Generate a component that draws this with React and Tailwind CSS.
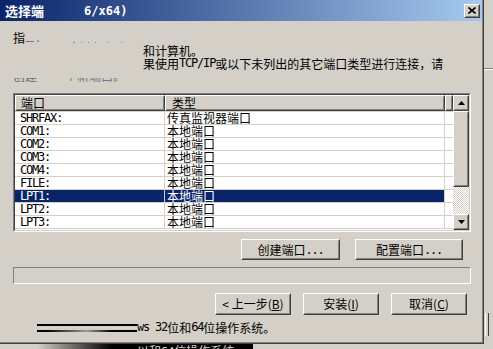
import React from 'react';

const cjk = "font-['Noto_Sans_CJK_SC',sans-serif]";
const mono = "font-['DejaVu_Sans_Mono',monospace] text-[12px] tracking-[-1.2px]";

const ports = [
  ['SHRFAX:', '传真监视器端口'],
  ['COM1:', '本地端口'],
  ['COM2:', '本地端口'],
  ['COM3:', '本地端口'],
  ['COM4:', '本地端口'],
  ['FILE:', '本地端口'],
  ['LPT1:', '本地端口'],
  ['LPT2:', '本地端口'],
  ['LPT3:', '本地端口'],
];

// classic raised 3D edge
const Bevel = ({ className = '', inner = 'justify-center', children }) => (
  <div className={`flex border border-t-white border-l-white border-r-[#404040] border-b-[#404040] bg-[#d4d0c8] ${className}`}>
    <div className={`flex flex-1 items-center border border-t-[#d4d0c8] border-l-[#d4d0c8] border-r-[#808080] border-b-[#808080] ${inner}`}>
      {children}
    </div>
  </div>
);

const Arrow = ({ down }) => (
  <svg width="7" height="4" viewBox="0 0 7 4">
    <path d={down ? 'M0 0h7L3.5 4z' : 'M0 4h7L3.5 0z'} fill="#000" />
  </svg>
);

const Dot = ({ ml, w = 1 }) => (
  <span className="h-[1px] bg-[#8a8a8a]" style={{ marginLeft: ml, width: w }} />
);

export default function App() {
  return (
    <div className={`flex h-[349px] w-[493px] flex-col overflow-hidden bg-[#d4d0c8] text-[12px] text-black ${cjk}`}>
      <div className="flex">
        {/* dialog */}
        <div className="flex h-[344px] w-[484px] flex-col border-r border-b border-[#404040]">
          <div className="flex flex-1 flex-col border-r border-b border-[#808080] bg-[#d4d0c8]">
            {/* title bar */}
            <div className="flex h-[21px] items-center bg-[linear-gradient(to_right,#0a246a,#a6caf0)] pl-[5px] pr-[2px]">
              <span className="text-[13px] font-bold leading-none text-white">选择端</span>
              <span className="ml-[40px] font-['DejaVu_Sans_Mono',monospace] text-[12px] font-bold leading-none text-white">6/x64)</span>
              <Bevel className="ml-auto h-[14px] w-[16px]">
                <svg width="8" height="7" viewBox="0 0 8 7">
                  <path d="M0.5 0.5l7 6M7.5 0.5l-7 6" stroke="#000" strokeWidth="1.6" />
                </svg>
              </Bevel>
            </div>

            <div className="flex flex-col pt-[10px] pr-[11px] pl-[13px]">
              {/* intro text, partly smudged */}
              <div className="flex flex-col leading-[13px]">
                <div className="flex h-[13px] items-end">
                  <span className="self-start">指</span>
                  <span className="mb-[2px] ml-[1px] h-[1px] w-[8px] bg-[#777]" />
                  <span className="mb-[2px] ml-[3px] h-[2px] w-[2px] bg-[#999]" />
                  <span className="mb-[1px] flex items-end">
                    <Dot ml={34} w={2} />
                    <Dot ml={6} />
                    <Dot ml={6} />
                    <Dot ml={6} />
                    <Dot ml={12} />
                    <Dot ml={12} />
                  </span>
                </div>
                <div className="h-[13px] pl-[130px]">和计算机。</div>
                <div className="flex h-[13px] pl-[130px]">
                  <span>果使用</span>
                  <span className={`${mono} leading-[13px]`}>TCP/IP</span>
                  <span>或以下未列出的其它端口类型进行连接，请</span>
                </div>
                <div className="flex h-[13px] items-end pb-[1px]">
                  <div className="flex h-[4px] flex-col justify-end overflow-hidden text-[#666]">
                    <span className="leading-[13px]">创建</span>
                  </div>
                  <div className="ml-[16px] flex h-[4px] flex-col justify-end overflow-hidden text-[#777]">
                    <span className="leading-[13px]">一个新端口。</span>
                  </div>
                </div>
              </div>

              {/* port list */}
              <div className="mt-[10px] flex h-[139px] border border-t-[#808080] border-l-[#808080] border-r-white border-b-white">
                <div className="flex flex-1 border border-t-[#404040] border-l-[#404040] border-r-[#d4d0c8] border-b-[#d4d0c8] bg-white">
                  <div className="flex w-[438px] flex-col">
                    <div className="flex h-[16px]">
                      <Bevel className="w-[150px]" inner="justify-start pl-[4px] leading-none">端口</Bevel>
                      <Bevel className="w-[280px]" inner="justify-start pl-[5px] leading-none">类型</Bevel>
                      <Bevel className="flex-1" />
                    </div>
                    <div className="flex flex-col border-t border-[#d4d0c8]">
                      {ports.map(([port, type]) => {
                        const sel = port === 'LPT1:';
                        return (
                          <div key={port} className="flex h-[13px] border-b border-[#d4d0c8] leading-[12px]">
                            <div className={`flex w-[150px] items-end border-r border-[#d4d0c8] pl-[5px] ${sel ? 'bg-[#0a246a] text-white' : ''}`}>
                              <span className={`${mono} leading-[12px]`}>{port}</span>
                            </div>
                            <div className={`w-[280px] border-r border-[#d4d0c8] pl-[2px] ${sel ? 'bg-[#0a246a] text-white' : ''}`}>
                              {type}
                            </div>
                          </div>
                        );
                      })}
                    </div>
                  </div>
                  {/* scrollbar */}
                  <div className="flex w-[16px] flex-col">
                    <Bevel className="h-[16px]"><Arrow /></Bevel>
                    <Bevel className="h-[76px]" />
                    <div className="flex-1 bg-[repeating-conic-gradient(#ffffff_0_25%,#d4d0c8_0_50%)] bg-[length:2px_2px]" />
                    <Bevel className="h-[16px]"><Arrow down /></Bevel>
                  </div>
                </div>
              </div>

              {/* port buttons */}
              <div className="mt-[7px] flex justify-end gap-[15px] pr-[8px]">
                <Bevel className="h-[21px] w-[99px]">创建端口<span className={mono}>...</span></Bevel>
                <Bevel className="h-[21px] w-[108px]">配置端口<span className={mono}>...</span></Bevel>
              </div>

              {/* status field */}
              <div className="mt-[7px] h-[17px] border border-t-[#808080] border-l-[#808080] border-r-white border-b-white" />

              {/* wizard buttons */}
              <div className="mt-[9px] flex justify-end gap-[12px] pr-[4px]">
                <Bevel className="h-[22px] w-[76px]">&lt; 上一步(<u>B</u>)</Bevel>
                <Bevel className="h-[22px] w-[76px]">安装(<u>I</u>)</Bevel>
                <Bevel className="h-[22px] w-[76px]">取消(<u>C</u>)</Bevel>
              </div>

              {/* bottom note with smudge bar */}
              <div className="mt-[6px] flex h-[13px] items-center leading-[13px]">
                <div className="ml-[24px] flex w-[100px] flex-col">
                  <span className="h-[2px] bg-black" />
                  <span className="mt-[4px] h-[2px] bg-[linear-gradient(to_right,#000,#000_10%,#9a9a9a_50%,#000_75%,#000)]" />
                </div>
                <span className={mono}>ws 32</span>
                <span>位和</span>
                <span className={mono}>64</span>
                <span>位操作系统。</span>
              </div>
            </div>
          </div>
        </div>

        {/* window behind, right edge */}
        <div className="flex w-[9px] flex-col bg-[#d4d0c8]">
          <span className="mt-[68px] h-[1px] bg-[#808080]" />
          <span className="h-[1px] bg-white" />
          <span className="mt-[243px] ml-[1px] h-[23px] w-[4px] border-l border-r border-l-white border-r-[#404040]" />
        </div>
      </div>

      {/* window behind, bottom edge */}
      <div className="flex h-[5px]">
        <div className="w-[12px]" />
        <div className="w-[125px] bg-[linear-gradient(to_right,#d4d0c8,#d4d0c8_20%,#000_80%,#000)]" />
        <div className="flex w-[116px] flex-col overflow-hidden bg-black text-[12px] leading-[13px] text-[#d8d8d8]">
          <span>以和64位操作系统。</span>
        </div>
      </div>
    </div>
  );
}
